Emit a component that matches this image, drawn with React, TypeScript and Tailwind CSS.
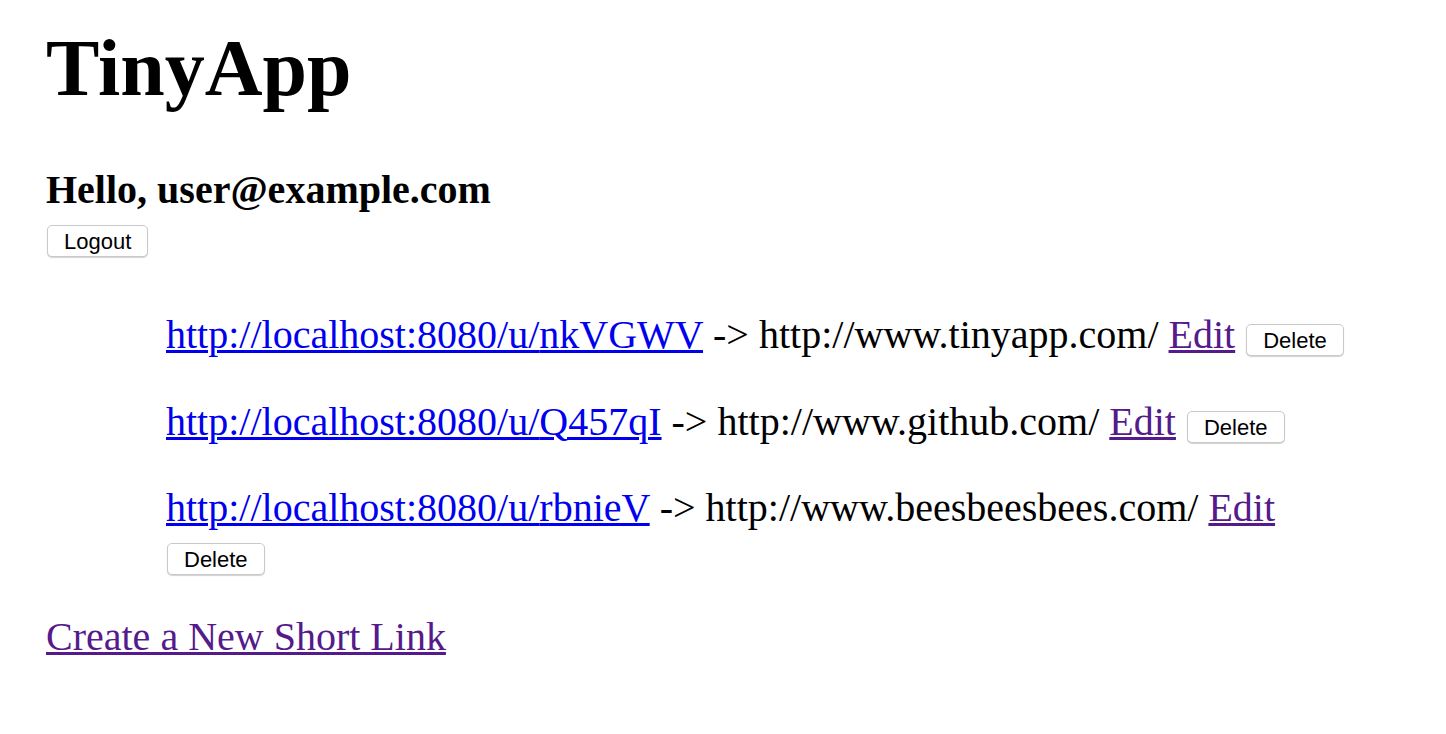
import React from 'react';

const URLS = [
  { id: 'nkVGWV', longURL: 'http://www.tinyapp.com/' },
  { id: 'Q457qI', longURL: 'http://www.github.com/' },
  { id: 'rbnieV', longURL: 'http://www.beesbeesbees.com/' },
];

const linkBase = 'underline decoration-[3px] underline-offset-[2px]';

function NativeButton({ label, className = '' }: { label: string; className?: string }) {
  return (
    <button
      className={`inline-block h-[32px] pt-[2px] px-[16px] bg-white border border-[#c9c9c9] rounded-[5px] shadow-[0_1px_1px_rgba(0,0,0,0.18)] font-['Liberation_Sans',Arial,sans-serif] text-[22px] leading-[28px] text-black align-baseline ${className}`}
    >
      {label}
    </button>
  );
}

export default function App() {
  return (
    <div className="bg-white min-h-screen pl-[46px] pr-[46px] font-['Liberation_Serif','Times_New_Roman',serif] text-black">
      {/* Header */}
      <h1 className="pt-[22px] text-[80px] font-bold leading-[92px]">TinyApp</h1>

      <h3 className="mt-[53px] text-[40px] font-bold leading-[46px]">Hello, user@example.com</h3>
      <form className="mt-[12px] ml-px" onSubmit={(e) => e.preventDefault()}>
        <NativeButton label="Logout" />
      </form>

      {/* URL list */}
      <ul className="mt-[55px] pl-[120px] pr-[40px] flex flex-col gap-[40.5px] text-[40px] leading-[46px]">
        {URLS.map((url) => (
          <li key={url.id}>
            <a href="#" className={`${linkBase} text-[#0000ee]`}>
              http://localhost:8080/u/{url.id}
            </a>{' '}
            -&gt; {url.longURL}{' '}
            <a href="#" className={`${linkBase} text-[#551a8b]`}>
              Edit
            </a>{' '}
            <NativeButton label="Delete" className="ml-px" />
          </li>
        ))}
      </ul>

      <div className="mt-[37px] text-[40px] leading-[46px]">
        <a href="#" className={`${linkBase} text-[#551a8b]`}>
          Create a New Short Link
        </a>
      </div>
    </div>
  );
}
